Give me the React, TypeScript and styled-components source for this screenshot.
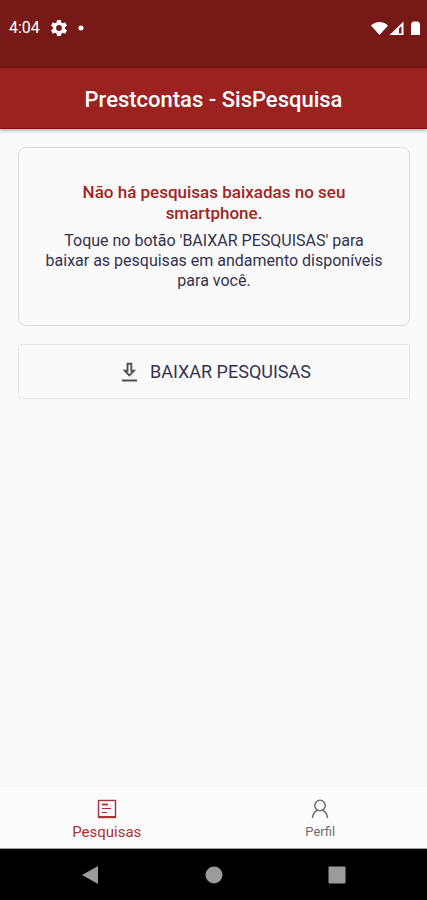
import React from "react";
import styled, { createGlobalStyle } from "styled-components";

const GlobalStyle = createGlobalStyle`
  *, *::before, *::after { box-sizing: border-box; }
  body { margin: 0; background: #fafafa; font-family: Roboto, sans-serif; }
  svg { display: block; flex: none; }
`;

const Screen = styled.div`
  display: flex;
  flex-direction: column;
  min-height: 100vh;
  background: #fafafa;
`;

const StatusBar = styled.div`
  display: flex;
  align-items: flex-start;
  justify-content: space-between;
  height: 68px;
  padding: 18px 7px 0 9px;
  background: #771917;
  color: #fff;
`;

const StatusGroup = styled.div<{ $gap: number }>`
  display: flex;
  align-items: center;
  gap: ${({ $gap }) => $gap}px;
  height: 19px;
`;

const Clock = styled.span`
  font-size: 16px;
  line-height: 19px;
`;

const AppBar = styled.header`
  display: flex;
  align-items: center;
  justify-content: center;
  height: 61px;
  padding-top: 4px;
  background: #9c221f;
  border-bottom: 1px solid #86100f;
  box-shadow: 0 1px 4px rgba(0, 0, 0, 0.4);
`;

const Title = styled.h1`
  margin: 0;
  font-size: 22px;
  line-height: 26px;
  font-weight: 500;
  color: #fff;
`;

const Content = styled.main`
  display: flex;
  flex: 1;
  flex-direction: column;
  gap: 18px;
  padding: 18px 17px 18px 18px;
`;

const Card = styled.section`
  display: flex;
  flex-direction: column;
  gap: 7px;
  padding: 34px 24px;
  border: 1px solid #dcdcde;
  border-radius: 8px;
  text-align: center;
`;

const CardHeading = styled.h2`
  margin: 0;
  padding: 0 24px;
  font-size: 17px;
  line-height: 21px;
  font-weight: 500;
  color: #a32422;
`;

const CardText = styled.p`
  margin: 0;
  font-size: 16px;
  line-height: 20px;
  color: #33324c;
`;

const DownloadButton = styled.button`
  display: flex;
  align-items: center;
  justify-content: center;
  gap: 12px;
  height: 55px;
  padding: 0 16px 0 20px;
  border: 1px solid #e4e4e6;
  border-radius: 4px;
  background: transparent;
  color: #35344f;
  font-family: inherit;
  font-size: 18px;
  line-height: 22px;
  cursor: pointer;
`;

const TabBar = styled.nav`
  display: flex;
  height: 63px;
  background: #fcfcfc;
  border-top: 1px solid #f5f5f5;
  border-bottom: 1px solid #a0a0a0;
`;

const Tab = styled.button<{ $active?: boolean }>`
  display: flex;
  flex: 1;
  flex-direction: column;
  align-items: center;
  gap: 4px;
  padding: 12px 0 0;
  border: 0;
  background: transparent;
  color: ${({ $active }) => ($active ? "#a83234" : "#6e6e6e")};
  font-family: inherit;
  font-size: ${({ $active }) => ($active ? 15 : 13)}px;
  line-height: 18px;
  cursor: pointer;
`;

const SystemBar = styled.div`
  display: flex;
  align-items: center;
  justify-content: center;
  gap: 83px;
  height: 51px;
  background: #000;
`;

const SystemButton = styled.button`
  display: flex;
  align-items: center;
  justify-content: center;
  width: 40px;
  height: 40px;
  padding: 0;
  border: 0;
  background: transparent;
  color: #9b9b9b;
`;

const GearIcon = () => (
  <svg width="16" height="16" viewBox="2 2 20 20" fill="currentColor" aria-hidden="true">
    <path fillRule="evenodd" d="M19.4 13a7.500 7.500 0 0 0 0-2l2.200-1.700a.5.5 0 0 0 .1-.6l-2-3.500a.5.5 0 0 0-.6-.2l-2.600 1a7.500 7.500 0 0 0-1.700-1l-.4-2.600a.5.5 0 0 0-.5-.4h-4a.5.5 0 0 0-.5.400L9 5a7.500 7.500 0 0 0-1.700 1l-2.500-1a.5.5 0 0 0-.6.200l-2 3.500a.5.5 0 0 0 .1.600L4.500 11a7.500 7.500 0 0 0 0 2l-2.200 1.700a.5.5 0 0 0-.1.600l2 3.500c.1.200.4.300.6.200l2.500-1a7.500 7.500 0 0 0 1.700 1l.4 2.600c0 .2.200.4.500.4h4c.3 0 .5-.2.500-.4L15 19a7.500 7.500 0 0 0 1.700-1l2.500 1c.2.100.5 0 .6-.2l2-3.500a.5.5 0 0 0-.1-.6zM12 15.600a3.600 3.600 0 1 1 0-7.200 3.600 3.600 0 0 1 0 7.200z" />
  </svg>
);

const DotIcon = () => (
  <svg width="6" height="6" viewBox="0 0 6 6" aria-hidden="true">
    <circle cx="3" cy="3" r="2.500" fill="currentColor" />
  </svg>
);

const SignalIcons = () => (
  <svg width="49" height="16" viewBox="0 0 49 16" fill="currentColor" aria-hidden="true">
    <path d="M0 5.500C4.500.8 12.500.8 17 5.500L8.500 15z" />
    <path fillRule="evenodd" d="M18.500 15 32.500 1.500V15zM28 13.500h2.500V6l-2.500 2.600z" />
    <path d="M40 3.500 42 1.500h5l2 2V15h-9z" />
  </svg>
);

const DownloadIcon = () => (
  <svg width="17" height="20" viewBox="0 0 17 20" fill="none" stroke="#505057" aria-hidden="true">
    <path d="M6.500 1.800h3.800v7h2.600L8.400 13.300 3.900 8.800h2.600z" strokeWidth="1.900" />
    <path d="M1 18.500h15" strokeWidth="2" />
  </svg>
);

const SurveyIcon = () => (
  <svg width="20" height="20" viewBox="0 0 20 20" fill="none" stroke="currentColor" aria-hidden="true">
    <rect x="1.500" y="1.500" width="17" height="17" strokeWidth="1.400" />
    <path d="M1 18h18" strokeWidth="2" />
    <path d="M5 5.500h6" strokeWidth="1.800" />
    <path d="M5 9.500h9M5 13.500h5" strokeWidth="1.200" />
  </svg>
);

const ProfileIcon = () => (
  <svg width="20" height="20" viewBox="0 0 20 20" fill="none" stroke="currentColor" strokeWidth="1.500" aria-hidden="true">
    <circle cx="10" cy="6.500" r="5.200" />
    <path d="M2.500 19c.3-4 2.200-6.600 5-7.800M17.500 19c-.3-4-2.200-6.600-5-7.800" />
  </svg>
);

export default function App() {
  return (
    <>
      <GlobalStyle />
      <Screen>
        <StatusBar>
          <StatusGroup $gap={11}>
            <Clock>4:04</Clock>
            <GearIcon />
            <DotIcon />
          </StatusGroup>
          <StatusGroup $gap={0}>
            <SignalIcons />
          </StatusGroup>
        </StatusBar>
        <AppBar>
          <Title>Prestcontas - SisPesquisa</Title>
        </AppBar>
        <Content>
          <Card>
            <CardHeading>Não há pesquisas baixadas no seu smartphone.</CardHeading>
            <CardText>
              Toque no botão 'BAIXAR PESQUISAS' para baixar as pesquisas em andamento disponíveis para você.
            </CardText>
          </Card>
          <DownloadButton type="button">
            <DownloadIcon />
            BAIXAR PESQUISAS
          </DownloadButton>
        </Content>
        <TabBar>
          <Tab type="button" $active aria-current="page">
            <SurveyIcon />
            Pesquisas
          </Tab>
          <Tab type="button">
            <ProfileIcon />
            Perfil
          </Tab>
        </TabBar>
        <SystemBar>
          <SystemButton type="button" aria-label="Voltar">
            <svg width="18" height="20" viewBox="0 0 18 20" fill="currentColor">
              <path d="M0 10 16 1v18z" />
            </svg>
          </SystemButton>
          <SystemButton type="button" aria-label="Início">
            <svg width="18" height="18" viewBox="0 0 18 18" fill="currentColor">
              <circle cx="9" cy="9" r="8.500" />
            </svg>
          </SystemButton>
          <SystemButton type="button" aria-label="Recentes">
            <svg width="18" height="18" viewBox="0 0 18 18" fill="currentColor">
              <rect x="0.500" y="0.500" width="17" height="17" rx="1" />
            </svg>
          </SystemButton>
        </SystemBar>
      </Screen>
    </>
  );
}
